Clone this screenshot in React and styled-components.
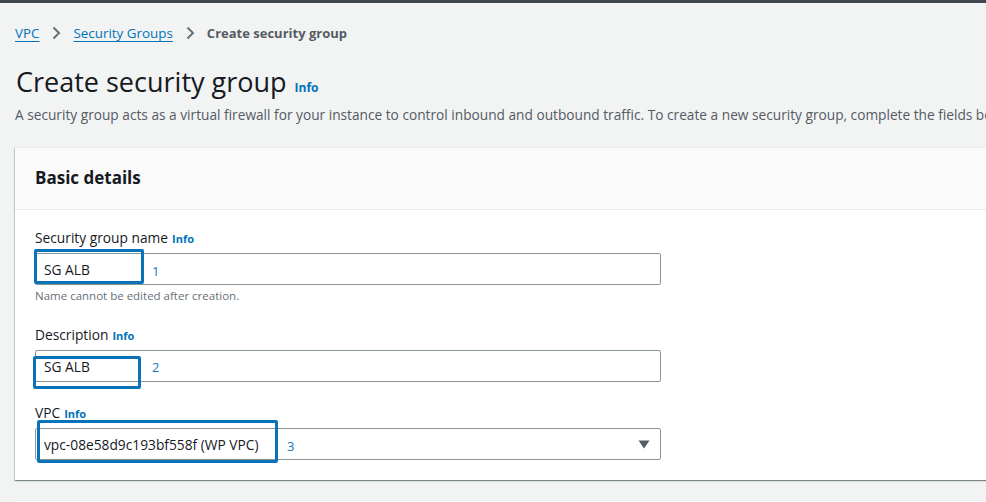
import React from "react";
import styled, { createGlobalStyle } from "styled-components";

const GlobalStyle = createGlobalStyle`
  html, body {
    margin: 0;
    padding: 0;
    background: #f2f3f3;
    overflow: hidden;
  }
  body {
    font-family: "Open Sans", "Noto Sans", sans-serif;
    color: #16191f;
  }
`;

const TopBar = styled.div`
  height: 3px;
  background: #414750;
`;

const Main = styled.main`
  padding: 20px 0 0 15px;
`;

const Crumbs = styled.nav`
  display: flex;
  align-items: center;
  gap: 11px;
  height: 20px;
  font-size: 13.4px;
  line-height: 20px;
`;

const CrumbLink = styled.a`
  color: #0073bb;
  text-decoration: underline;
  text-underline-offset: 3px;
  text-decoration-thickness: 1px;
`;

const CrumbCurrent = styled.span`
  color: #545b64;
  font-weight: 700;
  font-size: 13px;
`;

const Chevron = () => (
  <svg width="12" height="14" viewBox="0 0 12 14" aria-hidden="true">
    <path d="M3.5 1.5 L9 7 L3.5 12.5" fill="none" stroke="#687078" strokeWidth="2" />
  </svg>
);

const TitleRow = styled.div`
  display: flex;
  align-items: baseline;
  gap: 8px;
  margin-top: 21px;
  padding-left: 1px;
`;

const Title = styled.h1`
  margin: 0;
  font-size: 27px;
  line-height: 36px;
  font-weight: 400;
  color: #16191f;
`;

const InfoLink = styled.a`
  color: #0073bb;
  font-weight: 700;
  font-size: ${(p) => (p.$small ? "11px" : "12px")};
  text-decoration: none;
`;

const Lead = styled.p`
  margin: 5px 0 0 0;
  font-size: 13.7px;
  line-height: 20px;
  color: #545b64;
  white-space: nowrap;
`;

const Card = styled.section`
  margin: 22px -60px 0 0;
  background: #ffffff;
  box-shadow: 0 1px 1px 0 rgba(0, 28, 36, 0.3), 1px 1px 1px 0 rgba(0, 28, 36, 0.15),
    -1px 1px 1px 0 rgba(0, 28, 36, 0.15);
  border-top: 1px solid #eaeded;
`;

const CardHeader = styled.header`
  background: #fafafa;
  border-bottom: 1px solid #eaeded;
  padding: 19px 20px 20px;
`;

const CardTitle = styled.h2`
  margin: 0;
  font-size: 17px;
  line-height: 22px;
  font-weight: 700;
`;

const CardBody = styled.div`
  padding: 18px 20px 20px;
  display: flex;
  flex-direction: column;
  gap: 21px;
`;

const Field = styled.div`
  display: flex;
  flex-direction: column;
`;

const Label = styled.label`
  display: flex;
  align-items: baseline;
  gap: 4px;
  font-size: 13.75px;
  line-height: 20px;
  margin-bottom: 4px;
`;

const Control = styled.div`
  position: relative;
  width: 626px;
  height: 32px;
  box-sizing: border-box;
  border: 1px solid #879596;
  border-radius: 2px;
  background: #fff;
  display: flex;
  align-items: center;
  justify-content: space-between;
  padding: 0 10px 0 8px;
  font-size: 13.75px;
`;

const Hint = styled.div`
  margin-top: 3px;
  font-size: 11.5px;
  line-height: 16px;
  color: #687078;
`;

const Mark = styled.div`
  position: absolute;
  left: ${(p) => p.$x}px;
  top: ${(p) => p.$y}px;
  width: ${(p) => p.$w}px;
  height: ${(p) => p.$h}px;
  box-sizing: border-box;
  border: 3px solid #0a72b8;
  border-radius: 2px;
  pointer-events: none;
`;

const MarkNumber = styled.span`
  position: absolute;
  left: ${(p) => p.$x}px;
  top: ${(p) => p.$y}px;
  color: #1a76b8;
  font-size: 13px;
  line-height: 16px;
`;

const Caret = () => (
  <svg width="12" height="9" viewBox="0 0 12 9" aria-hidden="true">
    <path d="M0.5 0.5 H11.5 L6 8.5 Z" fill="#545b64" />
  </svg>
);

const NextCard = styled.section`
  margin: 20px -60px 0 0;
  height: 40px;
  background: #ffffff;
  border-top: 1px solid #eaeded;
`;

export default function App() {
  return (
    <>
      <GlobalStyle />
      <TopBar />
      <Main>
        <Crumbs>
          <CrumbLink>VPC</CrumbLink>
          <Chevron />
          <CrumbLink>Security Groups</CrumbLink>
          <Chevron />
          <CrumbCurrent>Create security group</CrumbCurrent>
        </Crumbs>
        <TitleRow>
          <Title>Create security group</Title>
          <InfoLink>Info</InfoLink>
        </TitleRow>
        <Lead>
          A security group acts as a virtual firewall for your instance to control inbound and outbound
          traffic. To create a new security group, complete the fields below.
        </Lead>
        <Card>
          <CardHeader>
            <CardTitle>Basic details</CardTitle>
          </CardHeader>
          <CardBody>
            <Field>
              <Label>
                Security group name <InfoLink $small>Info</InfoLink>
              </Label>
              <Control>
                <span>SG ALB</span>
                <Mark $x={-2} $y={-5} $w={110} $h={35} />
                <MarkNumber $x={116} $y={9}>1</MarkNumber>
              </Control>
              <Hint>Name cannot be edited after creation.</Hint>
            </Field>
            <Field>
              <Label>
                Description <InfoLink $small>Info</InfoLink>
              </Label>
              <Control>
                <span>SG ALB</span>
                <Mark $x={-3} $y={5} $w={108} $h={33} />
                <MarkNumber $x={116} $y={8}>2</MarkNumber>
              </Control>
            </Field>
            <Field>
              <Label>
                VPC <InfoLink $small>Info</InfoLink>
              </Label>
              <Control>
                <span>vpc-08e58d9c193bf558f (WP VPC)</span>
                <Caret />
                <Mark $x={1} $y={-9} $w={241} $h={43} />
                <MarkNumber $x={251} $y={9}>3</MarkNumber>
              </Control>
            </Field>
          </CardBody>
        </Card>
        <NextCard />
      </Main>
    </>
  );
}
